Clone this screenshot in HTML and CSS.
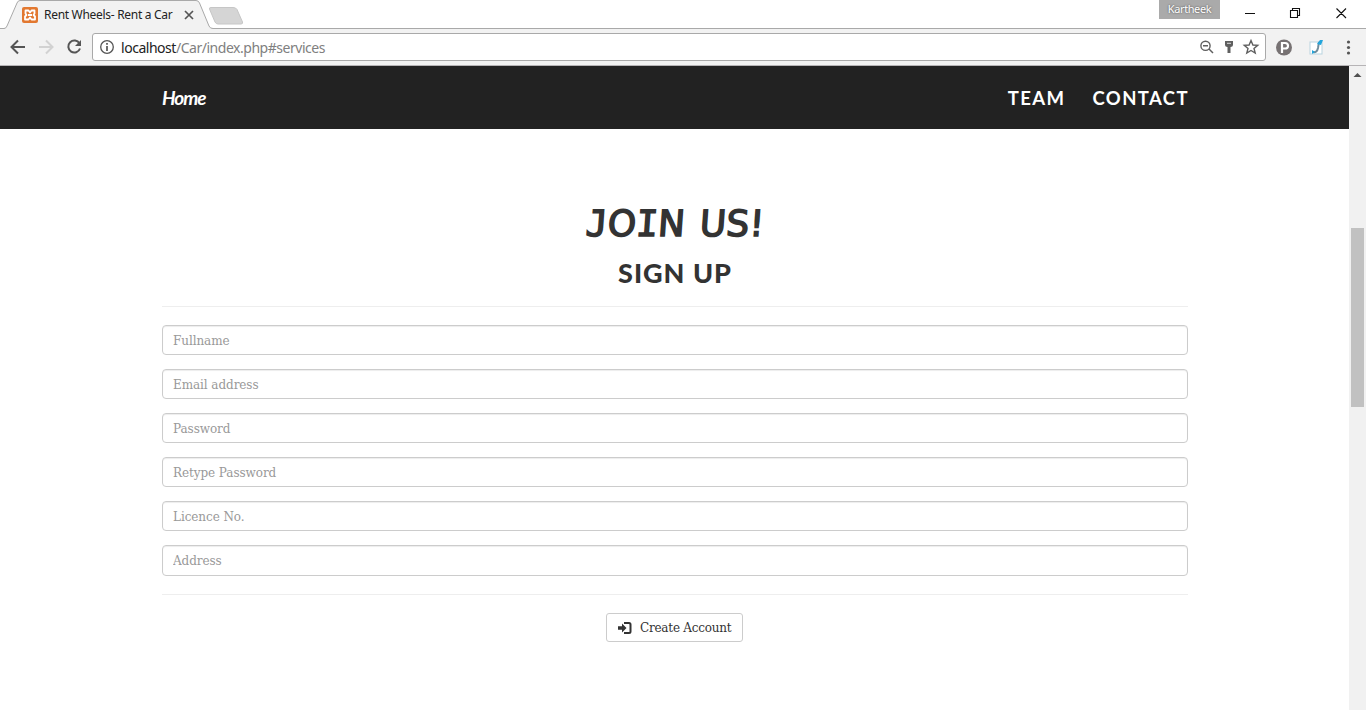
FILE: index.html
```html
<!DOCTYPE html>
<html lang="en">
<head>
<meta charset="utf-8">
<title>Rent Wheels- Rent a Car</title>
<link rel="stylesheet" href="styles.css">
</head>
<body>
<header class="browser">
  <div class="tabstrip">
    <svg class="tab-shape" width="260" height="29" viewBox="0 0 260 29">
      <path d="M0 28.500H4Q6 28.500 7 26L17 3Q18 .5 20 .5H196Q198.500 .5 199.500 3L209 26Q210 28.500 213 28.500H260V29H0Z" fill="#f2f2f2"/>
      <path d="M0 28.500H4Q6 28.500 7 26L17 3Q18 .5 20 .5H196Q198.500 .5 199.500 3L209 26Q210 28.500 213 28.500H260" fill="none" stroke="#a9a9a9"/>
      <path d="M211 7.500H233Q236 7.500 237 9.500L242.500 22Q243 24 241 24H218Q216 24 215 22L209.500 9Q209 7.500 211 7.500Z" fill="#d5d5d5" stroke="#c6c6c6"/>
    </svg>
    <div class="tab">
      <svg width="16" height="16" viewBox="0 0 16 16"><rect width="16" height="16" rx="2" fill="#e27830"/><path d="M8 5.500L6.500 3.500H3.500V6.500L4.500 8L3 9.500V12.500H6.500L8 10.500L9.500 12.500H13V9.500L11.500 8L12.500 6.500V3.500H9.500ZM6 8H10" fill="none" stroke="#fff" stroke-width="1.800" stroke-linejoin="round"/></svg>
      <span class="tab-title">Rent Wheels- Rent a Car</span>
      <svg width="10" height="10" viewBox="0 0 10 10"><path d="M1 1L9 9M9 1L1 9" stroke="#555" stroke-width="1.700"/></svg>
    </div>
    <div class="window-controls">
      <span class="profile">Kartheek</span>
      <svg width="120" height="26" viewBox="0 0 120 26" fill="none" stroke="#111"><path d="M15 13.500H25M60.500 10.500H67.500V17.500H60.500ZM62.500 10V8.500H69.500V15.500H68M106.500 8.500L116 18M116 8.500L106.500 18" stroke-width="1.100"/></svg>
    </div>
  </div>
  <div class="toolbar">
    <svg class="nav-icons" width="84" height="28" viewBox="0 0 84 28" fill="none" stroke-width="2">
      <path d="M25 14H12M18 7.500L11.500 14L18 20.500" stroke="#555"/>
      <path d="M39 14H52M46 7.500L52.500 14L46 20.500" stroke="#d2d2d2"/>
      <path d="M79.500 10.500A6 6 0 1 0 80 15.500" stroke="#555"/><path d="M81 7V13H75Z" fill="#555"/>
    </svg>
    <div class="address">
      <svg width="16" height="16" viewBox="0 0 16 16"><circle cx="8" cy="8" r="6.300" fill="none" stroke="#555" stroke-width="1.300"/><path d="M8 7V12M8 4V5.700" stroke="#555" stroke-width="1.700"/></svg>
      <span class="url">localhost<span class="path">/Car/index.php#services</span></span>
      <svg width="66" height="20" viewBox="0 0 66 20" fill="none" stroke="#5f5f5f">
        <circle cx="7.500" cy="8.800" r="4.600" stroke-width="1.400"/><path d="M5 8.800H10M11 12L15 16" stroke-width="1.500"/>
        <path d="M27 4H35V8Q35 10 32.500 10V16H29.500V10Q27 10 27 8Z" fill="#5f5f5f" stroke="none"/><path d="M29 6.300H33" stroke="#ddd"/>
        <path d="M53 3.500L54.900 8L59.700 8.300L56 11.400L57.200 16L53 13.500L48.800 16L50 11.400L46.300 8.300L51.100 8Z" stroke-width="1.400"/>
      </svg>
    </div>
    <svg width="100" height="28" viewBox="0 0 100 28">
      <circle cx="18" cy="14.500" r="8" fill="#777273"/><path d="M16 20V10H19Q22 10 22 12.800T19 15.500H16" fill="none" stroke="#fff" stroke-width="2.200"/>
      <rect x="44" y="9" width="12" height="12" fill="#fff" stroke="#b9d4df"/><path d="M47 19Q51 20 52 15L53 9" fill="none" stroke="#708d9d" stroke-width="2"/><path d="M51 11L54 7L57 7L55 12ZM46 17L49 19L46 21Z" fill="#22a5dc"/>
      <g fill="#555"><circle cx="82.500" cy="9" r="1.600"/><circle cx="82.500" cy="14.500" r="1.600"/><circle cx="82.500" cy="20" r="1.600"/></g>
    </svg>
  </div>
</header>
<div class="viewport">
  <div class="page">
    <nav class="navbar">
      <a class="brand">Home</a>
      <div class="links"><a>TEAM</a><a>CONTACT</a></div>
    </nav>
    <main class="signup">
      <h1><span class="slab">J</span>O<span class="slab">I</span>N US!</h1>
      <h2>SIGN UP</h2>
      <hr>
      <form>
        <input type="text" placeholder="Fullname">
        <input type="text" placeholder="Email address">
        <input type="password" placeholder="Password">
        <input type="password" placeholder="Retype Password">
        <input type="text" placeholder="Licence No.">
        <input class="last" type="text" placeholder="Address">
        <hr class="end">
        <button type="button">
          <svg width="14" height="14" viewBox="0 0 14 14"><path d="M0 5.200H4V2.500L8.500 7L4 11.500V8.800H0Z" fill="#333"/><path d="M6 2H11Q12.500 2 12.500 3.500V10.500Q12.500 12 11 12H6" fill="none" stroke="#333" stroke-width="2"/></svg>
          <span>Create Account</span>
        </button>
      </form>
    </main>
  </div>
  <div class="scrollbar">
    <svg width="17" height="17" viewBox="0 0 17 17"><path d="M4.500 11L8.500 7L12.500 11Z" fill="#505050"/></svg>
    <div class="thumb"></div>
  </div>
</div>
</body>
</html>
```
FILE: styles.css
```css
* { box-sizing: border-box; }
body { margin: 0; width: 1366px; height: 710px; overflow: hidden; background: #fff; color: #333; }
svg { display: block; flex: none; }
.browser { font-family: "Noto Sans", "Open Sans", sans-serif; }
.tabstrip { position: relative; height: 29px; display: flex; justify-content: space-between; border-bottom: 1px solid #a9a9a9; }
.tab-shape { position: absolute; left: 0; top: 0; }
.tab { position: relative; display: flex; align-items: center; height: 29px; padding-left: 22px; }
.tab-title { width: 140px; margin-left: 6px; font-size: 12px; letter-spacing: -0.3px; color: #222; white-space: nowrap; }
.window-controls { display: flex; align-items: flex-start; margin-right: 16px; }
.window-controls svg { margin-left: 10px; }
.profile { width: 61px; height: 19px; background: #aaa; color: #fff; font-size: 11px; line-height: 18px; letter-spacing: -0.4px; text-align: center; text-shadow: 0 0 2px #444; }
.toolbar { height: 37px; display: flex; align-items: center; background: #f2f2f2; border-bottom: 1px solid #b6b4b6; }
.address { flex: 1; height: 28px; margin-left: 8px; padding: 0 1px 0 6px; display: flex; align-items: center; background: #fff; border: 1px solid #a9a9a9; border-radius: 3px; }
.url { flex: 1; margin-left: 6px; font-size: 14px; letter-spacing: -0.47px; color: #222; }
.path { color: #808080; }
.viewport { display: flex; height: 644px; }
.page { flex: 1; }
.navbar { height: 63px; padding: 0 160px 0 162px; display: flex; align-items: center; justify-content: space-between; background: #222; color: #fff; font-family: Lato, sans-serif; }
.brand { font-size: 19px; font-style: italic; font-weight: 700; letter-spacing: -1px; }
.links { display: flex; gap: 27px; font-size: 18.5px; font-weight: 700; letter-spacing: 1.4px; }
.signup { padding: 72px 161px 0 162px; text-align: center; }
h1 { margin: 0; height: 46px; font: 400 36px/46px "DejaVu Sans", sans-serif; letter-spacing: 0.2px; word-spacing: 3px; -webkit-text-stroke: 1.5px #333; white-space: nowrap; transform: skewX(-4deg); }
.slab { font-family: "DejaVu Sans Mono", monospace; }
h2 { margin: 10px 0 0; height: 34px; font: 900 27px/32px Lato, sans-serif; letter-spacing: 1px; }
hr { height: 1px; margin: 15px 0 18px; border: 0; background: #eee; }
hr.end { margin: 18px 0; }
form { display: block; }
input { display: block; width: 100%; height: 30px; margin: 0 0 14px; padding: 2px 10px 0; border: 1px solid #ccc; border-radius: 4px; box-shadow: inset 0 1px 1px rgba(0,0,0,.075); background: #fff; font: 12px "DejaVu Serif", serif; letter-spacing: -0.07px; }
input.last { height: 31px; margin: 0; padding-top: 0; }
input::placeholder { color: #999; }
button { display: flex; align-items: center; width: 137px; height: 29px; margin: 0 auto; padding: 0 10px 0 11px; gap: 8px; border: 1px solid #ccc; border-radius: 3px; background: #fff; color: #333; font: 12px "DejaVu Serif", serif; letter-spacing: -0.22px; white-space: nowrap; }
form button { margin-left: 444px; }
.scrollbar { width: 17px; background: #f1f1f1; }
.thumb { width: 13px; height: 179px; margin: 145px 0 0 2px; background: #c1c1c1; }
```
